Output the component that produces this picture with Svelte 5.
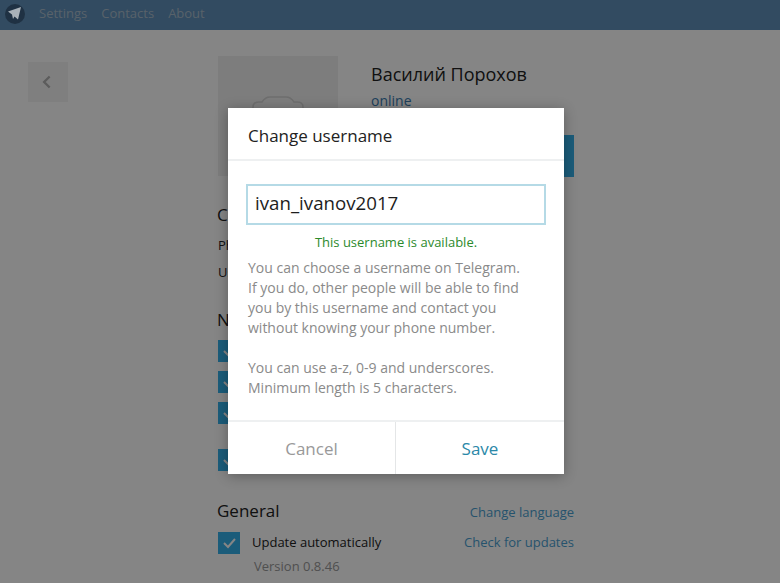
<script>
  const checks = ['', '', '', ''];
</script>

<div class="page">
  <header class="topbar">
    <div class="logo">
      <svg viewBox="0 0 14 14" width="14" height="14"><path d="M0 4.5 13 0 10 12.500 6.500 9.500 5 12 4 7.500Z" fill="#a9b1b8"/></svg>
    </div>
    <nav class="nav"><span>Settings</span><span>Contacts</span><span>About</span></nav>
  </header>

  <div class="layout">
    <div class="back">
      <svg viewBox="0 0 14 20" width="11" height="16"><path d="M11 3 4 10l7 7" fill="none" stroke="#b0b0b0" stroke-width="3"/></svg>
    </div>
    <main class="main">
      <section class="profile">
        <div class="avatar">
          <svg viewBox="0 0 52 14" width="52" height="14"><path d="M1 14v-2c0-3 2-5 6-5h3c2-3 4-5 8-5h16c4 0 6 2 8 5h3c4 0 6 2 6 5v2" fill="none" stroke="#d3d3d3" stroke-width="1.5"/></svg>
        </div>
        <div class="identity">
          <h1>Василий Порохов</h1>
          <div class="online">online</div>
          <div class="cta"></div>
        </div>
      </section>
      <h2 class="contact">Contact</h2>
      <p class="field">Phone</p>
      <p class="field">Username</p>
      <h2 class="notify">Notifications</h2>
      <div class="checks">
        {#each checks as _, i}
          <div class="check" class:gap={i === 3}>
            <svg viewBox="0 0 22 22"><path d="m6 11 4 4 7-8" fill="none" stroke="#fff" stroke-width="2"/></svg>
          </div>
        {/each}
      </div>
      <div class="general-head">
        <h2>General</h2><span class="link head-link">Change language</span>
      </div>
      <div class="general-row">
        <div class="check"><svg viewBox="0 0 22 22"><path d="m6 11 4 4 7-8" fill="none" stroke="#fff" stroke-width="2"/></svg></div>
        <span class="label">Update automatically</span>
        <span class="link row-link">Check for updates</span>
      </div>
      <div class="version">Version 0.8.46</div>
    </main>
  </div>

  <div class="overlay">
    <div class="dialog">
      <div class="title">Change username</div>
      <div class="body">
        <div class="input">ivan_ivanov2017</div>
        <div class="ok">This username is available.</div>
        <p>You can choose a username on Telegram.<br>If you do, other people will be able to find<br>you by this username and contact you<br>without knowing your phone number.</p>
        <p>You can use a-z, 0-9 and underscores.<br>Minimum length is 5 characters.</p>
      </div>
      <div class="actions">
        <div class="btn cancel">Cancel</div>
        <div class="btn save">Save</div>
      </div>
    </div>
  </div>
</div>

<style>
  :global(body) { margin: 0; }
  .page {
    position: relative;
    width: 780px;
    height: 583px;
    overflow: hidden;
    background: #fff;
    font-family: "Open Sans", sans-serif;
    color: #222;
  }
  .topbar {
    height: 30px;
    background: #6090ba;
    display: flex;
    align-items: center;
    padding-left: 5px;
  }
  .logo {
    width: 20px;
    height: 20px;
    border-radius: 50%;
    background: #3c5f80;
    display: flex;
    align-items: center;
    justify-content: center;
    margin-top: -2px;
  }
  .logo svg { position: relative; z-index: 2; }
  .nav {
    display: flex;
    gap: 14px;
    margin-left: 14px;
    margin-top: -5px;
    font-size: 13px;
    color: #a9bccb;
  }
  .layout { display: flex; }
  .back {
    width: 40px;
    height: 40px;
    margin: 32px 0 0 28px;
    background: #f4f4f4;
    display: flex;
    align-items: center;
    justify-content: center;
    padding-right: 3px;
    box-sizing: border-box;
  }
  .main { width: 356px; margin: 26px 0 0 150px; }
  .profile { display: flex; gap: 33px; height: 120px; }
  .avatar {
    width: 120px;
    height: 120px;
    flex: none;
    background: #f0f0f0;
    display: flex;
    justify-content: center;
    box-sizing: border-box;
    padding-top: 39px;
  }
  .avatar svg { display: block; }
  .identity { flex: 1; position: relative; }
  h1 { margin: 4px 0 0; font-size: 18px; line-height: 28px; font-weight: 400; }
  .online { font-size: 14px; line-height: 20px; margin-top: 3px; color: #3a7bb0; }
  .cta { height: 42px; margin-top: 24px; background: #34b0ea; }
  h2 { margin: 0 0 0 -1px; font-size: 17px; line-height: 24px; font-weight: 400; }
  .contact { margin-top: 27px; }
  .field { margin: 8px 0 0; font-size: 13px; line-height: 20px; }
  .field + .field { margin-top: 7px; }
  .notify { margin-top: 26px; }
  .checks { display: flex; flex-direction: column; gap: 9px; margin-top: 8px; }
  .check { width: 22px; height: 22px; background: #34b0ea; flex: none; }
  .check svg { display: block; width: 22px; height: 22px; }
  .check.gap { margin-top: 16px; }
  .general-head {
    display: flex;
    justify-content: space-between;
    align-items: center;
    margin-top: 28px;
  }
  .link { font-size: 13px; color: #4a9fd2; }
  .head-link { margin-top: 2px; }
  .general-row { display: flex; align-items: center; margin-top: 9px; line-height: 20px; }
  .label { font-size: 13px; margin: 0 0 2px 12px; flex: 1; }
  .row-link { margin-bottom: 2px; }
  .version { margin: 3px 0 0 36px; font-size: 13px; color: #999; }

  .overlay {
    position: absolute;
    inset: 0;
    z-index: 1;
    background: rgba(0, 0, 0, 0.48);
  }
  .dialog {
    position: absolute;
    left: 228px;
    top: 108px;
    width: 336px;
    height: 366px;
    background: #fff;
    display: flex;
    flex-direction: column;
    box-shadow: 0 2px 12px rgba(0, 0, 0, 0.3);
  }
  .title {
    height: 53px;
    box-sizing: border-box;
    padding: 4px 0 0 20px;
    display: flex;
    align-items: center;
    font-size: 17px;
    color: #222;
    border-bottom: 2px solid #eef0f1;
  }
  .body { flex: 1; padding: 23px 19px 0; }
  .input {
    height: 37px;
    margin: 0 -1px;
    border: 2px solid #b5dae6;
    padding-left: 7px;
    font-size: 18.7px;
    line-height: 33px;
    color: #1d1d1d;
  }
  .ok {
    margin-top: 8px;
    text-align: center;
    font-size: 13px;
    line-height: 18px;
    color: #2c8a2c;
  }
  .body p {
    margin: 7px 0 20px 1px;
    font-size: 14px;
    line-height: 20px;
    color: #8a8a8a;
  }
  .body p + p { margin-top: 20px; }
  .actions {
    height: 52px;
    display: flex;
    border-top: 2px solid #eef0f1;
  }
  .btn {
    display: flex;
    align-items: center;
    justify-content: center;
    font-size: 17px;
  }
  .cancel {
    flex: none;
    width: 168px;
    box-sizing: border-box;
    color: #999;
    border-right: 1px solid #e4e6e7;
  }
  .save { flex: 1; color: #2b88a8; }
</style>
